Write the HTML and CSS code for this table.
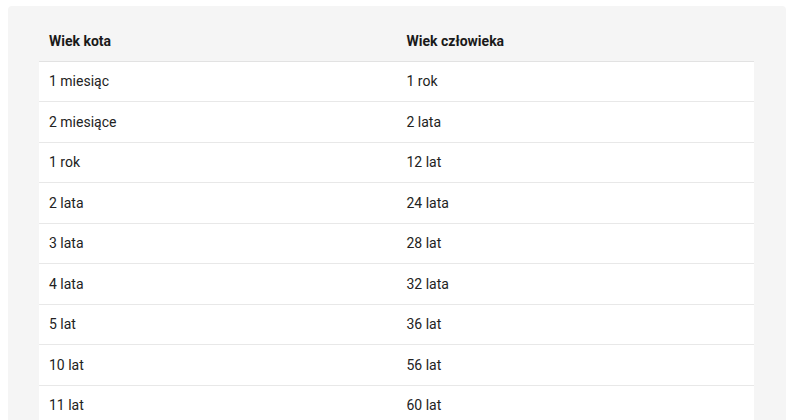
FILE: index.html
```html
<!DOCTYPE html>
<html lang="pl">
<head>
<meta charset="utf-8">
<title>Wiek kota</title>
<link rel="stylesheet" href="styles.css">
</head>
<body>
<div class="panel">
  <table class="age-table">
    <thead>
      <tr><th>Wiek kota</th><th>Wiek człowieka</th></tr>
    </thead>
    <tbody>
      <tr><td>1 miesiąc</td><td>1 rok</td></tr>
      <tr><td>2 miesiące</td><td>2 lata</td></tr>
      <tr><td>1 rok</td><td>12 lat</td></tr>
      <tr><td>2 lata</td><td>24 lata</td></tr>
      <tr><td>3 lata</td><td>28 lat</td></tr>
      <tr><td>4 lata</td><td>32 lata</td></tr>
      <tr><td>5 lat</td><td>36 lat</td></tr>
      <tr><td>10 lat</td><td>56 lat</td></tr>
      <tr><td>11 lat</td><td>60 lat</td></tr>
    </tbody>
  </table>
</div>
</body>
</html>
```
FILE: styles.css
```css
html, body {
  margin: 0;
  padding: 0;
  background: #ffffff;
  overflow: hidden;
}
body {
  font-family: Roboto, "Liberation Sans", Arial, sans-serif;
  color: #222222;
  font-size: 14px;
}
.panel {
  margin: 6px 14px 0 8px;
  padding: 15px 32px 20px 31px;
  background: #f5f5f5;
  border-radius: 4px;
}
.age-table {
  width: 100%;
  border-collapse: collapse;
  table-layout: fixed;
}
.age-table th {
  text-align: left;
  font-weight: 700;
  height: 40px;
  padding: 0 10px;
  box-sizing: border-box;
  border-bottom: 1px solid #e2e2e2;
  background: #f5f5f5;
  color: #1a1a1a;
}
.age-table td {
  background: #ffffff;
  height: 39.5px;
  padding: 0 10px;
  border-bottom: 1px solid #e8e8e8;
  color: #222222;
}
```
